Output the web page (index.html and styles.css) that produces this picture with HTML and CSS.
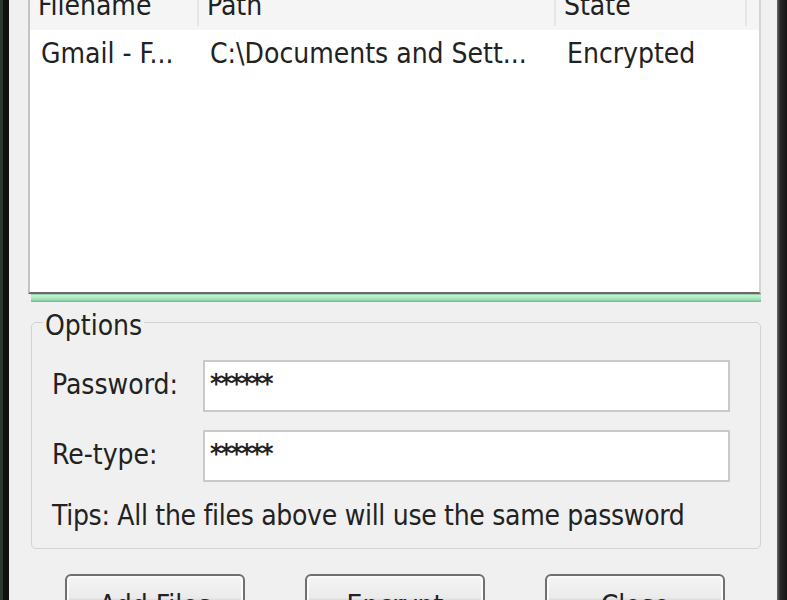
FILE: index.html
```html
<!DOCTYPE html>
<html>
<head>
<meta charset="utf-8">
<link rel="stylesheet" href="styles.css">
</head>
<body>
<div class="window">
  <div class="frame-left"></div>
  <div class="content">
    <div class="list">
      <div class="list-head">
        <div class="col c1 head">Filename</div>
        <div class="col c2 head">Path</div>
        <div class="col c3 head">State</div>
        <div class="col c4 head"></div>
      </div>
      <div class="list-row">
        <div class="col c1 cell">Gmail - F...</div>
        <div class="col c2 cell">C:\Documents and Sett...</div>
        <div class="col c3 cell">Encrypted</div>
      </div>
    </div>
    <div class="progress"><div class="progress-fill"></div></div>
    <fieldset class="options">
      <legend class="options-title">Options</legend>
      <div class="field first">
        <label class="field-label">Password:</label>
        <div class="field-input">******</div>
      </div>
      <div class="field">
        <label class="field-label">Re-type:</label>
        <div class="field-input">******</div>
      </div>
      <div class="tips">Tips: All the files above will use the same password</div>
    </fieldset>
    <div class="buttons">
      <button class="btn">Add Files</button>
      <button class="btn">Encrypt</button>
      <button class="btn">Close</button>
    </div>
  </div>
  <div class="frame-right"></div>
</div>
</body>
</html>
```

FILE: styles.css
```css
html, body {
  margin: 0;
  padding: 0;
  height: 100%;
  overflow: hidden;
}
body {
  background: #f0f0f0;
  font-family: "DejaVu Sans Condensed", "DejaVu Sans", sans-serif;
  font-size: 28px;
  line-height: 28px;
  color: #222;
}
.window {
  display: flex;
  height: 600px;
}
.frame-left {
  width: 9px;
  flex: none;
  background: linear-gradient(to right, #2c3b31 0, #2c3b31 3px, #111 3px, #111 9px);
}
.frame-right {
  width: 10px;
  flex: none;
  background: linear-gradient(to right, #6a6a6a 0, #2a2a2a 3px, #151515 10px);
}
.content {
  flex: 1;
  padding: 0 16px 0 19px;
  background: #f0f0f0;
}
.list {
  margin-top: -8px;
  height: 302px;
  background: #fff;
  border-left: 2px solid #c4c4c4;
  border-right: 2px solid #d4d4d4;
  border-bottom: 2px solid #6a6a6a;
  box-sizing: border-box;
}
.list-head {
  display: flex;
  height: 38px;
  background: #f5f5f5;
}
.list-row {
  display: flex;
  padding-top: 10px;
}
.col {
  white-space: nowrap;
  overflow: hidden;
  box-sizing: border-box;
}
.c1 { width: 169px; }
.c2 { width: 357px; }
.c3 { width: 191px; }
.c4 { flex: 1; }
.head {
  padding-left: 8px;
  border-right: 2px solid #e6e6e6;
  height: 34px;
}
.head.c4 { border-right: none; }
.cell {
  padding-left: 11px;
}
.progress {
  height: 8px;
  margin-left: 3px;
  background: #d9f7e4;
  border-top: 1px solid #9fc9ae;
  box-sizing: border-box;
}
.progress-fill {
  height: 100%;
  background: linear-gradient(#c6f5d6, #9fe6ba 60%, #6fb88a);
}
.options {
  margin: 2px 0 0 3px;
  padding: 0 0 18px 0;
  border: 1.5px solid #d3d3d3;
  border-radius: 5px;
  min-width: 0;
}
.options-title {
  margin-left: 11px;
  padding: 8px 2px 0 2px;
  line-height: 28px;
}
.field {
  display: flex;
  align-items: flex-start;
  margin-top: 18px;
}
.field.first {
  margin-top: 20px;
}
.field-label {
  width: 151px;
  padding: 11px 0 0 20px;
  flex: none;
}
.field-input {
  width: 527px;
  height: 52px;
  box-sizing: border-box;
  background: #fff;
  border: 2px solid #c9c9c9;
  padding: 8px 0 0 5px;
  letter-spacing: -2px;
  font-weight: bold;
  font-size: 26px;
}
.tips {
  margin-top: 20px;
  padding-left: 20px;
  letter-spacing: -0.3px;
}
.buttons {
  display: flex;
  gap: 60px;
  padding-left: 37px;
  margin-top: 25px;
}
.btn {
  width: 180px;
  height: 52px;
  flex: none;
  font: inherit;
  color: #222;
  border: 2px solid #707070;
  border-radius: 6px;
  background: linear-gradient(#f4f4f4 0%, #ebebeb 45%, #dcdcdc 50%, #cfcfcf 100%);
  box-shadow: inset 0 0 0 2px #fbfbfb;
  padding: 11px 0 0 0;
  text-align: center;
  vertical-align: top;
  display: block;
}
```
